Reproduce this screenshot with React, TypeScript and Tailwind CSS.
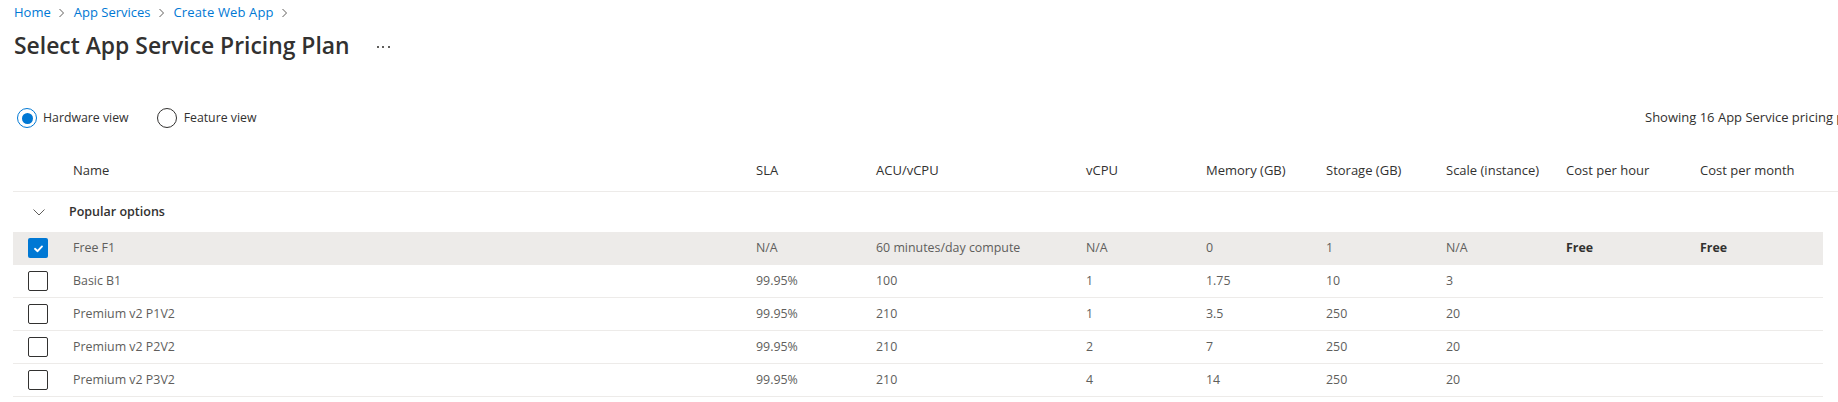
import React from "react";

const COLS =
  "grid grid-cols-[60px_683px_120px_210px_120px_120px_120px_120px_134px_123px] items-center";

function Chevron() {
  return (
    <svg width="8" height="10" viewBox="0 0 8 10" className="ml-[6px] mr-[9px] shrink-0">
      <path d="M2.5 1 L6.5 5 L2.5 9" fill="none" stroke="#605e5c" strokeWidth="1" />
    </svg>
  );
}

function CheckBox({ checked }: { checked: boolean }) {
  if (checked) {
    return (
      <div className="w-[20px] h-[20px] rounded-[2px] bg-[#0078d4] flex items-center justify-center">
        <svg width="20" height="20" viewBox="0 0 20 20">
          <path d="M7 10.8 L9.6 13.2 L14 8.4" fill="none" stroke="#ffffff" strokeWidth="1.9" strokeLinecap="round" strokeLinejoin="round" />
        </svg>
      </div>
    );
  }
  return <div className="w-[20px] h-[20px] rounded-[2px] border border-[#323130] bg-white" />;
}

type Row = {
  name: string;
  sla: string;
  acu: string;
  vcpu: string;
  mem: string;
  storage: string;
  scale: string;
  hour: string;
  month: string;
  selected?: boolean;
};

const rows: Row[] = [
  { name: "Free F1", sla: "N/A", acu: "60 minutes/day compute", vcpu: "N/A", mem: "0", storage: "1", scale: "N/A", hour: "Free", month: "Free", selected: true },
  { name: "Basic B1", sla: "99.95%", acu: "100", vcpu: "1", mem: "1.75", storage: "10", scale: "3", hour: "", month: "" },
  { name: "Premium v2 P1V2", sla: "99.95%", acu: "210", vcpu: "1", mem: "3.5", storage: "250", scale: "20", hour: "", month: "" },
  { name: "Premium v2 P2V2", sla: "99.95%", acu: "210", vcpu: "2", mem: "7", storage: "250", scale: "20", hour: "", month: "" },
  { name: "Premium v2 P3V2", sla: "99.95%", acu: "210", vcpu: "4", mem: "14", storage: "250", scale: "20", hour: "", month: "" },
];

const headers = ["Name", "SLA", "ACU/vCPU", "vCPU", "Memory (GB)", "Storage (GB)", "Scale (instance)", "Cost per hour", "Cost per month"];

export default function App() {
  return (
    <div className="w-full h-[402px] overflow-hidden bg-white font-['Open_Sans',sans-serif] text-[13px] text-[#323130]">
      <div className="w-[1920px] pl-[13px]">
        {/* Breadcrumb */}
        <div className="h-[26px] flex items-center pl-[1px] text-[#0078d4]">
          <span>Home</span>
          <Chevron />
          <span>App Services</span>
          <Chevron />
          <span className="tracking-[0.15px]">Create Web App</span>
          <Chevron />
        </div>

        {/* Title */}
        <div className="mt-[4px] h-[32px] flex items-center pl-[1px]">
          <h1 className="text-[22.9px] leading-[32px] font-semibold text-[#323130]">
            Select App Service Pricing Plan
          </h1>
          <div className="ml-[27px] mt-[2px] flex items-center gap-[3.5px]">
            <span className="w-[2px] h-[2px] bg-[#605e5c]" />
            <span className="w-[2px] h-[2px] bg-[#605e5c]" />
            <span className="w-[2px] h-[2px] bg-[#605e5c]" />
          </div>
        </div>

        {/* Radio row */}
        <div className="mt-[46px] h-[20px] flex items-center">
          <div className="w-[1632px] flex items-center pl-[4px] text-[12.3px]">
            <div className="flex items-center">
              <div className="w-[20px] h-[20px] rounded-full border border-[#0078d4] flex items-center justify-center">
                <div className="w-[11px] h-[11px] rounded-full bg-[#0078d4]" />
              </div>
              <span className="ml-[6px]">Hardware view</span>
            </div>
            <div className="flex items-center ml-[28px]">
              <div className="w-[20px] h-[20px] rounded-full border border-[#323130]" />
              <span className="ml-[7px]">Feature view</span>
            </div>
          </div>
          <span className="whitespace-nowrap">Showing 16 App Service pricing plans</span>
        </div>

        {/* Table header */}
        <div className="mt-[22px] h-[42px] border-b border-[#edebe9]">
          <div className={`${COLS} h-full`}>
            <div />
            {headers.map((h) => (
              <div key={h} className="whitespace-nowrap text-[#323130]">
                {h}
              </div>
            ))}
          </div>
        </div>

        {/* Group row */}
        <div className="w-[1810px] h-[40px] flex items-center">
          <svg width="12" height="7" viewBox="0 0 12 7" className="ml-[20px]">
            <path d="M0.5 0.5 L6 6 L11.5 0.5" fill="none" stroke="#605e5c" strokeWidth="1" />
          </svg>
          <span className="ml-[24px] text-[12.5px] font-semibold text-[#323130]">Popular options</span>
        </div>

        {/* Data rows */}
        {rows.map((r) => (
          <div
            key={r.name}
            className={`${COLS} w-[1810px] h-[33px] border-b border-[#edebe9] ${r.selected ? "bg-[#edebe9]" : "bg-white"} text-[12.4px] text-[#605e5c]`}
          >
            <div className="pl-[15px] flex items-center">
              <CheckBox checked={!!r.selected} />
            </div>
            <div className="whitespace-nowrap">{r.name}</div>
            <div>{r.sla}</div>
            <div className="whitespace-nowrap">{r.acu}</div>
            <div>{r.vcpu}</div>
            <div>{r.mem}</div>
            <div>{r.storage}</div>
            <div>{r.scale}</div>
            <div className="font-bold text-[#323130]">{r.hour}</div>
            <div className="font-bold text-[#323130]">{r.month}</div>
          </div>
        ))}
      </div>
    </div>
  );
}
